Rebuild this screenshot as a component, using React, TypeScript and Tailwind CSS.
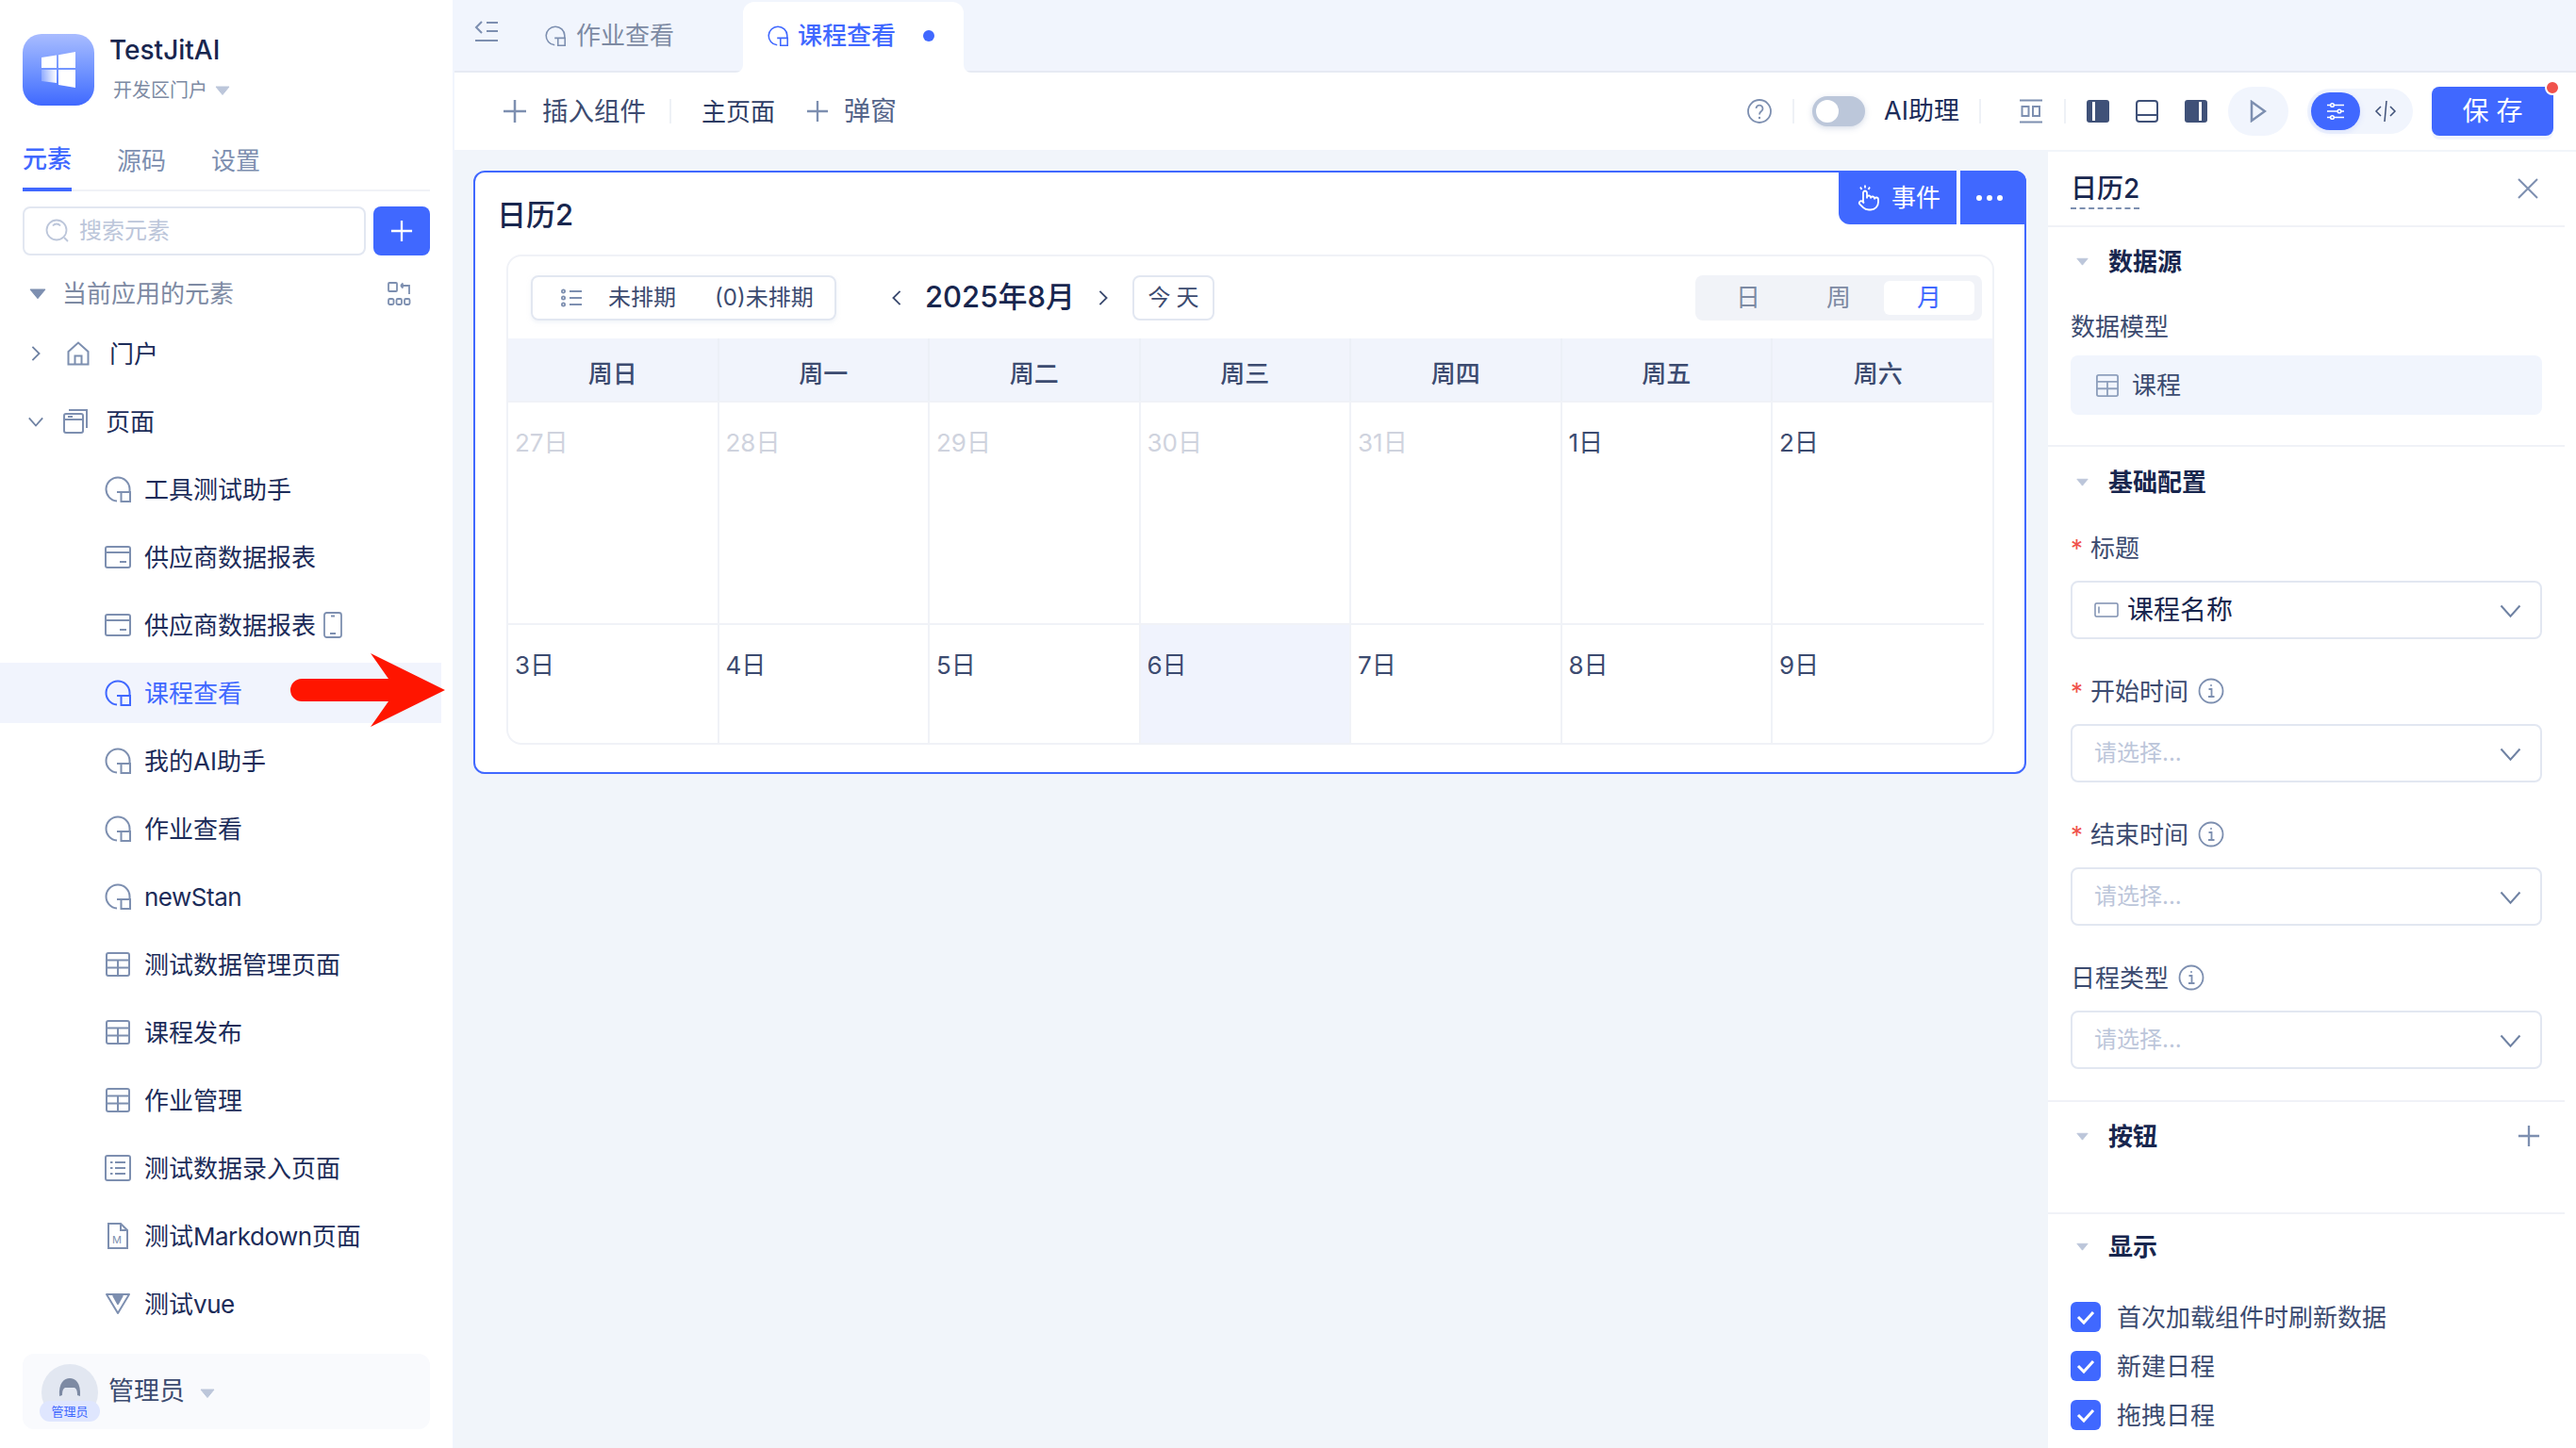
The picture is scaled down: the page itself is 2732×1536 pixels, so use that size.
import React from "react";

const S = "#7d8fb0";
const BLUE = "#4068ff";

function PageIcon({ c = S, s = 28 }: { c?: string; s?: number }) {
  return (
    <svg width={s} height={s} viewBox="0 0 28 28" fill="none" stroke={c} strokeWidth="2">
      <path d="M13 26.500A12.500 12.500 0 1 1 26.500 13.500V17" />
      <path d="M13 17h14v10H17.500V17" />
    </svg>
  );
}
function CardIcon() {
  return (
    <svg width="28" height="24" viewBox="0 0 28 24" fill="none" stroke={S} strokeWidth="2">
      <rect x="1" y="1" width="26" height="22" rx="2" />
      <path d="M1 7h26M16 17h7" />
    </svg>
  );
}
function TableIcon({ c = S, s = 26 }: { c?: string; s?: number }) {
  return (
    <svg width={s} height={s} viewBox="0 0 26 26" fill="none" stroke={c} strokeWidth="2">
      <rect x="1" y="1" width="24" height="24" rx="2" />
      <path d="M1 8.500h24M1 16.500h24M13 8.500V25" />
    </svg>
  );
}
function FormIcon() {
  return (
    <svg width="28" height="28" viewBox="0 0 28 28" fill="none" stroke={S} strokeWidth="2">
      <rect x="1" y="1" width="26" height="26" rx="2" />
      <path d="M6 8h2.500M11 8h11M6 14h2.500M11 14h11M6 20h2.500M11 20h11" />
    </svg>
  );
}
function MdIcon() {
  return (
    <svg width="22" height="28" viewBox="0 0 22 28" fill="none" stroke={S} strokeWidth="2">
      <path d="M1 1h13l7 7v19H1zM14 1v7h7" />
      <text x="5" y="22" fontSize="11" fill={S} stroke="none" fontFamily="Inter, sans-serif">M</text>
    </svg>
  );
}
function VueIcon() {
  return (
    <svg width="26" height="22" viewBox="0 0 26 22" fill="none" stroke={S} strokeWidth="2" strokeLinejoin="round">
      <path d="M1 1h24L13 21z" />
      <path d="M8 2l5 9 5-9" fill={S} />
    </svg>
  );
}
function Caret({ c = "#bcc6da", w = 16, h = 10 }: { c?: string; w?: number; h?: number }) {
  return (
    <svg width={w} height={h} viewBox="0 0 16 10">
      <path d="M1 1h14L8 9.500z" fill={c} stroke={c} strokeLinejoin="round" />
    </svg>
  );
}
function Chevron({ d = "down", s = 20, c = "#6f82a3", sw = 2 }: { d?: "down" | "right" | "left"; s?: number; c?: string; sw?: number }) {
  const p = d === "down" ? "M2 6l8 9 8-9" : d === "right" ? "M6 2l8 8-8 8" : "M14 2l-8 8 8 8";
  return (
    <svg width={s} height={s} viewBox="0 0 20 20" fill="none" stroke={c} strokeWidth={sw}>
      <path d={p} />
    </svg>
  );
}
function Plus({ s = 26, c = "#7d8fb0", sw = 2.500 }: { s?: number; c?: string; sw?: number }) {
  return (
    <svg width={s} height={s} viewBox="0 0 26 26" fill="none" stroke={c} strokeWidth={sw}>
      <path d="M13 1v24M1 13h24" />
    </svg>
  );
}
function Info() {
  return (
    <svg width="28" height="28" viewBox="0 0 28 28" fill="none" stroke={S} strokeWidth="1.800">
      <circle cx="14" cy="14" r="12.500" />
      <path d="M11.500 12h3v8M11 20h6.500" />
      <circle cx="14" cy="8" r="1" fill={S} stroke="none" />
    </svg>
  );
}
function Logo() {
  return (
    <div className="w-[76px] h-[76px] rounded-[20px] bg-gradient-to-b from-[#a9bcff] to-[#4068ff] flex items-center justify-center shrink-0">
      <svg width="36" height="38" viewBox="0 0 36 38">
        <defs>
          <linearGradient id="fade" x1="0" y1="0" x2="1" y2="0">
            <stop offset="0" stopColor="#fff" stopOpacity="0.25" />
            <stop offset="1" stopColor="#fff" />
          </linearGradient>
        </defs>
        <path d="M0 6l16-2.500V17H0z" fill="#fff" />
        <path d="M18 3.200L36 0v17H18z" fill="#fff" />
        <path d="M0 19h16v14L0 31z" fill="url(#fade)" />
        <path d="M18 19h18v19l-18-3z" fill="#fff" />
      </svg>
    </div>
  );
}

function Lat({ children }: { children: React.ReactNode }) {
  return <span className="tracking-[-0.5px]">{children}</span>;
}

const rows: { t: React.ReactNode; i: React.ReactNode; active?: boolean; extra?: React.ReactNode }[] = [
  { t: "工具测试助手", i: <PageIcon /> },
  { t: "供应商数据报表", i: <CardIcon /> },
  {
    t: "供应商数据报表",
    i: <CardIcon />,
    extra: (
      <svg className="ml-[8px]" width="20" height="28" viewBox="0 0 20 28" fill="none" stroke={S} strokeWidth="1.800">
        <rect x="1" y="1" width="18" height="26" rx="2.500" />
        <path d="M8 4.500h4M7 23h6" />
      </svg>
    ),
  },
  { t: "课程查看", i: <PageIcon c={BLUE} />, active: true },
  { t: "我的AI助手", i: <PageIcon /> },
  { t: "作业查看", i: <PageIcon /> },
  { t: <Lat>newStan</Lat>, i: <PageIcon /> },
  { t: "测试数据管理页面", i: <TableIcon /> },
  { t: "课程发布", i: <TableIcon /> },
  { t: "作业管理", i: <TableIcon /> },
  { t: "测试数据录入页面", i: <FormIcon /> },
  { t: <>测试<Lat>Markdown</Lat>页面</>, i: <MdIcon /> },
  { t: <>测试<Lat>vue</Lat></>, i: <VueIcon /> },
];

function Sidebar() {
  return (
    <aside className="w-[480px] shrink-0 h-full bg-white flex flex-col relative">
      <div className="flex gap-[16px] pt-[36px] pl-[24px]">
        <Logo />
        <div className="flex flex-col">
          <div className="text-[28px] leading-[32px] mt-[1px] font-medium text-[#18264e]">TestJitAI</div>
          <div className="flex items-center gap-[8px] pl-[4px] mt-[15px] text-[20px] leading-[24px] text-[#7d8aa3]">
            开发区门户 <Caret />
          </div>
        </div>
      </div>
      <div className="mx-[24px] mt-[28px] h-[63px] border-b-2 border-[#f0f2f7] flex gap-[48px] text-[26px] text-[#7d8fb0]">
        <div className="h-[63px] border-b-4 border-[#4068ff] text-[#4068ff] flex items-center pb-[2px] font-medium">元素</div>
        <div className="h-[61px] flex items-center">源码</div>
        <div className="h-[61px] flex items-center">设置</div>
      </div>
      <div className="mx-[24px] mt-[16px] flex gap-[8px] h-[52px]">
        <div className="w-[364px] border-2 border-[#e2e7f1] rounded-[8px] flex items-center pl-[22px] gap-[10px] text-[24px] text-[#bcc6da]">
          <svg width="26" height="26" viewBox="0 0 26 26" fill="none" stroke="#bcc6da" strokeWidth="1.800">
            <circle cx="12" cy="12" r="10.500" />
            <path d="M8 7.500a5 5 0 0 1 8 0M20 20l4 4" />
          </svg>
          搜索元素
        </div>
        <div className="w-[60px] bg-[#4068ff] rounded-[8px] flex items-center justify-center">
          <Plus s={24} c="#fff" />
        </div>
      </div>
      <div className="mt-[18px] h-[44px] flex items-center pl-[31px] text-[26px] text-[#7d8aa3]">
        <Caret c="#7d8fb0" w={18} h={11} />
        <span className="ml-[17px] flex-1">当前应用的元素</span>
        <svg className="mr-[44px]" width="25" height="25" viewBox="0 0 25 25" fill="none" stroke={S} strokeWidth="1.800">
          <rect x="1" y="1" width="9" height="9" rx="1" />
          <path d="M14 4l2.500-2.500M14 4l2.500 2.500M14 4h9v9" />
          <rect x="1" y="18" width="5.500" height="6" rx="1.500" />
          <rect x="9.500" y="18" width="5.500" height="6" rx="1.500" />
          <rect x="18" y="18" width="5.500" height="6" rx="1.500" />
        </svg>
      </div>
      <div className="mt-[10px] w-[468px] flex flex-col gap-[8px] text-[26px] text-[#1c2c59]">
        <div className="h-[64px] flex items-center pl-[29px]">
          <Chevron d="right" s={18} />
          <span className="ml-[24px] w-[24px] flex justify-center">
            <svg width="24" height="26" viewBox="0 0 24 26" fill="none" stroke={S} strokeWidth="2">
              <path d="M1.500 11L12 1.500 22.500 11v13.500h-21zM8.500 24.500v-9h7v9" />
            </svg>
          </span>
          <span className="ml-[21px]">门户</span>
        </div>
        <div className="h-[64px] flex items-center pl-[29px]">
          <Chevron d="down" s={18} />
          <span className="ml-[19px] w-[28px] flex justify-center">
            <svg width="26" height="26" viewBox="0 0 26 26" fill="none" stroke={S} strokeWidth="2">
              <path d="M6 1h19v19" />
              <rect x="1" y="5" width="20" height="20" rx="2" />
              <path d="M1 11h20M5 8h5" />
            </svg>
          </span>
          <span className="ml-[18px]">页面</span>
        </div>
        {rows.map((r, i) => (
          <div key={i} className={"h-[64px] flex items-center pl-[111px] " + (r.active ? "bg-[#f1f4fd] text-[#4068ff]" : "")}>
            <span className="w-[28px] flex justify-center shrink-0">{r.i}</span>
            <span className="ml-[14px]">{r.t}</span>
            {r.extra}
          </div>
        ))}
      </div>
      <div className="mt-auto mb-[20px] mx-[24px] h-[80px] rounded-[12px] bg-[#f9fafd] flex items-center pl-[20px] text-[27px] text-[#3c4b70]">
        <div className="relative w-[60px] h-[60px] mt-[2px] rounded-full bg-[#e2e7f1] shrink-0 flex justify-center overflow-visible">
          <svg className="mt-[14px]" width="24" height="22" viewBox="0 0 24 22">
            <path d="M1 20C0 6 6 1 12 1s12 5 11 19l-3-1c0-5-1-7-3-8H7c-2 1-3 3-3 8z" fill="#7d8aa3" />
          </svg>
          <div className="absolute left-[-2px] bottom-[-1px] w-[64px] h-[22px] rounded-full bg-[#dfe6fe] text-[13px] leading-[22px] text-center text-[#4068ff]">管理员</div>
        </div>
        <span className="ml-[11px]">管理员</span>
        <span className="ml-[16px] mt-[3px]"><Caret /></span>
      </div>
      <svg className="absolute left-[308px] top-[693px]" width="166" height="78" viewBox="0 0 166 78">
        <path d="M12 27H104L85 0l79 39-79 39 19-27H12a12 12 0 0 1 0-24z" fill="#ff1500" />
      </svg>
    </aside>
  );
}

function TopTabs() {
  return (
    <div className="h-[77px] shrink-0 flex border-b-2 border-[#e6eaf3] relative">
      <div className="w-[96px] pl-[21px] pt-[22px]">
        <svg width="26" height="22" viewBox="0 0 26 22" fill="none" stroke={S} strokeWidth="2">
          <path d="M8 1l-6 6 6 6M13 2h12M13 11h12M1 21h24" />
        </svg>
      </div>
      <div className="w-[210px] flex items-center h-[75px] gap-[11px] text-[26px] text-[#7d8aa3]">
        <PageIcon s={22} />
        <span>作业查看</span>
      </div>
      <div className="relative w-[234px] mt-[2px] h-[75px] bg-white rounded-t-[12px] flex items-center pl-[26px] mb-[-2px] pb-[4px] text-[26px] font-medium text-[#4068ff]">
        <svg className="absolute left-[-8px] bottom-0" width="8" height="8" viewBox="0 0 8 8">
          <path d="M8 0v8H0a8 8 0 0 0 8-8z" fill="#fff" />
        </svg>
        <svg className="absolute right-[-8px] bottom-0" width="8" height="8" viewBox="0 0 8 8">
          <path d="M0 0v8h8a8 8 0 0 1-8-8z" fill="#fff" />
        </svg>
        <PageIcon c={BLUE} s={22} />
        <span className="ml-[10px]">课程查看</span>
        <span className="ml-[29px] w-[12px] h-[12px] rounded-full bg-[#4068ff]" />
      </div>
    </div>
  );
}

function VDiv() {
  return <span className="block w-[2px] h-[26px] bg-[#eef1f6] shrink-0" />;
}

function Toolbar() {
  return (
    <div className="h-[82px] shrink-0 bg-white flex items-center pl-[51px] text-[#1c2c59]">
      <Plus s={26} />
      <span className="ml-[16px] pt-[2px] text-[27.500px] text-[#3c4b70]">插入组件</span>
      <span className="ml-[25px]"><VDiv /></span>
      <span className="ml-[32px] text-[26px] text-[#2c3b63]">主页面</span>
      <span className="ml-[33px]"><Plus s={24} /></span>
      <span className="ml-[16px] text-[28px] text-[#55658a]">弹窗</span>
      <span className="flex-1" />
      <svg width="26" height="26" viewBox="0 0 26 26" fill="none" stroke={S} strokeWidth="1.800">
        <circle cx="13" cy="13" r="12" />
        <path d="M9.500 10a3.500 3.500 0 1 1 5.500 3c-1.500 1-2 1.500-2 3.500" />
        <circle cx="13" cy="20" r="1.200" fill={S} stroke="none" />
      </svg>
      <span className="ml-[22px]"><VDiv /></span>
      <div className="ml-[19px] w-[56px] h-[32px] rounded-full bg-[#bcc7da] flex items-center pl-[4px] shadow-[0_2px_6px_rgba(120,140,180,0.3)]">
        <span className="w-[24px] h-[24px] rounded-full bg-white" />
      </div>
      <span className="ml-[20px] text-[27px]">AI助理</span>
      <span className="ml-[21px]"><VDiv /></span>
      <span className="ml-[41px]">
        <svg width="24" height="26" viewBox="0 0 24 26" fill="none" stroke={S} strokeWidth="2">
          <path d="M0 1.500h24M0 24.500h24" />
          <rect x="2.500" y="8" width="7" height="10" />
          <rect x="14" y="8" width="7" height="10" />
        </svg>
      </span>
      <span className="ml-[23px]"><VDiv /></span>
      <span className="ml-[22px]">
        <svg width="24" height="24" viewBox="0 0 24 24">
          <rect width="24" height="24" rx="3" fill="#3f5178" />
          <rect x="6" y="2" width="3" height="20" fill="#fff" />
        </svg>
      </span>
      <span className="ml-[28px]">
        <svg width="24" height="24" viewBox="0 0 24 24" fill="none" stroke="#3f5178" strokeWidth="2">
          <rect x="1" y="1" width="22" height="22" rx="3" />
          <path d="M1 16h22" />
        </svg>
      </span>
      <span className="ml-[28px]">
        <svg width="24" height="24" viewBox="0 0 24 24">
          <rect width="24" height="24" rx="3" fill="#3f5178" />
          <rect x="15" y="2" width="3" height="20" fill="#fff" />
        </svg>
      </span>
      <div className="ml-[22px] w-[64px] h-[52px] rounded-full bg-[#f1f5fd] flex items-center justify-center">
        <svg width="18" height="24" viewBox="0 0 18 24" fill="none" stroke={S} strokeWidth="2.500">
          <path d="M2 2v20l14-10z" />
        </svg>
      </div>
      <div className="ml-[20px] w-[112px] h-[48px] rounded-full bg-[#f1f5fd] flex items-center pl-[4px]">
        <span className="w-[52px] h-[40px] rounded-full bg-[#4068ff] flex items-center justify-center shadow-[0_2px_6px_rgba(64,104,255,0.15)]">
          <svg width="20" height="20" viewBox="0 0 20 20" fill="none" stroke="#fff" strokeWidth="1.600">
            <path d="M1 3.500h4M8.500 3.500h10.500M1 10h11M16 10h3M1 16.500h4M8.500 16.500h10.500" />
            <circle cx="6.500" cy="3.500" r="1.800" />
            <circle cx="14" cy="10" r="1.800" />
            <circle cx="6.500" cy="16.500" r="1.800" />
          </svg>
        </span>
        <span className="ml-[15px]">
          <svg width="24" height="24" viewBox="0 0 24 24" fill="none" stroke="#3f5178" strokeWidth="1.500">
            <path d="M7 7l-5 5 5 5M17 7l5 5-5 5M13 1l-2 22" />
          </svg>
        </span>
      </div>
      <div className="ml-[20px] mr-[24px] relative w-[129px] h-[52px] rounded-[8px] bg-[#4068ff] text-white text-[28px] tracking-[8px] pl-[8px] flex items-center justify-center shadow-[0_4px_0_#f1f4fd]">
        保存
        <span className="absolute right-[-7px] top-[-7px] w-[16px] h-[16px] rounded-full bg-[#f0524c] border-2 border-white" />
      </div>
    </div>
  );
}

const weekdays = ["周日", "周一", "周二", "周三", "周四", "周五", "周六"];
const r1 = ["27日", "28日", "29日", "30日", "31日", "1日", "2日"];
const r2 = ["3日", "4日", "5日", "6日", "7日", "8日", "9日"];

function Calendar() {
  return (
    <div className="relative w-[1647px] h-[640px] border-2 border-[#4068ff] rounded-[12px] bg-white flex flex-col pl-[33px] pr-[32px]">
      <div className="absolute right-[-2px] top-[-2px] h-[57px] w-[199px] bg-[#4068ff] rounded-tr-[12px] rounded-bl-[12px] flex items-center text-white text-[26px]">
        <span className="ml-[20px]">
          <svg width="24" height="32" viewBox="0 -5 24 29" fill="none" stroke="#fff" strokeWidth="1.800">
            <path d="M18 11v-1a2 2 0 0 0-2-2a2 2 0 0 0-2 2M14 10V9a2 2 0 0 0-2-2a2 2 0 0 0-2 2v1M10 9.500V4a2 2 0 0 0-2-2a2 2 0 0 0-2 2v10M18 11a2 2 0 1 1 4 0v3a8 8 0 0 1-8 8h-2c-2.800 0-4.500-.860-5.990-2.340l-3.600-3.600a2 2 0 0 1 2.830-2.820L7 15" />
            <path d="M8 -4v3M3 -2l1.500 2.500M13 -2l-1.500 2.500" />
          </svg>
        </span>
        <span className="ml-[12px] w-[52px]">事件</span>
        <span className="ml-[17px] w-[4px] h-[57px] bg-white" />
        <span className="ml-[17px] flex gap-[5px]">
          <span className="w-[6px] h-[6px] rounded-full bg-white" />
          <span className="w-[6px] h-[6px] rounded-full bg-white" />
          <span className="w-[6px] h-[6px] rounded-full bg-white" />
        </span>
      </div>
      <div className="ml-[-10px] h-[87px] pt-[4px] flex items-center text-[31px] font-medium text-[#18264e] shrink-0">
        <span>日历2</span>
      </div>
      <div className="w-[1578px] h-[520px] border-2 border-[#f0f2f7] rounded-[16px] overflow-hidden flex flex-col">
        <div className="h-[87px] shrink-0 flex items-center pl-[24px] pr-[11px]">
          <div className="w-[324px] h-[48px] border-2 border-[#e2e7f1] rounded-[8px] flex items-center pl-[30px] text-[24px] text-[#3c4b70] shadow-[0_2px_4px_rgba(226,231,241,0.5)]">
            <svg width="22" height="22" viewBox="0 0 22 22" fill="none" stroke={S} strokeWidth="1.800">
              <path d="M9 4h13M9 11h13M9 18h13" />
              <circle cx="2.500" cy="4" r="1.600" />
              <circle cx="2.500" cy="11" r="1.600" />
              <circle cx="2.500" cy="18" r="1.600" />
            </svg>
            <span className="ml-[28px]">未排期</span>
            <span className="ml-[41px]">(0)未排期</span>
          </div>
          <span className="ml-[55px]"><Chevron d="left" s={18} c="#3c4b70" /></span>
          <span className="ml-[21px] text-[31px] font-medium text-[#18264e]">2025年8月</span>
          <span className="ml-[21px]"><Chevron d="right" s={18} c="#3c4b70" /></span>
          <div className="ml-[22px] w-[87px] h-[48px] border-2 border-[#e2e7f1] rounded-[8px] flex items-center justify-center text-[24px] tracking-[6px] pl-[6px] text-[#3c4b70]">今天</div>
          <span className="flex-1" />
          <div className="w-[304px] h-[48px] rounded-[8px] bg-[#f1f3f8] flex items-center pl-[8px] text-[26px] text-[#7d8aa3]">
            <span className="w-[96px] text-center">日</span>
            <span className="w-[96px] text-center">周</span>
            <span className="w-[96px] h-[36px] leading-[36px] rounded-[6px] bg-white text-center text-[#4068ff]">月</span>
          </div>
        </div>
        <div className="h-[68px] shrink-0 bg-[#f1f4fc] grid grid-cols-[repeat(7,223.500px)] border-b-2 border-[#f0f2f7]">
          {weekdays.map((d, i) => (
            <div key={d} className={"flex items-center justify-center pt-[8px] text-[26px] font-medium text-[#3c4b70] " + (i < 6 ? "border-r-2 border-[#ecf0f7]" : "")}>{d}</div>
          ))}
        </div>
        <div className="h-[236px] shrink-0 grid grid-cols-[repeat(7,223.500px)] w-[1564.500px] border-b-2 border-[#f0f2f7]">
          {r1.map((d, i) => (
            <div key={d} className={"pl-[7px] pt-[24px] text-[26px] leading-[38px] " + (i < 5 ? "text-[#cfd3de] " : "text-[#3c4b70] ") + (i < 6 ? "border-r-2 border-[#f0f2f7]" : "")}>{d}</div>
          ))}
        </div>
        <div className="flex-1 grid grid-cols-[repeat(7,223.500px)] w-[1564.500px]">
          {r2.map((d, i) => (
            <div key={d} className={"pl-[7px] pt-[24px] text-[26px] leading-[38px] text-[#3c4b70] " + (i === 3 ? "bg-[#f0f3fd] " : "") + (i < 6 ? "border-r-2 border-[#f0f2f7]" : "")}>{d}</div>
          ))}
        </div>
      </div>
    </div>
  );
}

function SectionHead({ t, right }: { t: string; right?: React.ReactNode }) {
  return (
    <div className="h-[44px] flex items-center pl-[30px] pr-[26px]">
      <Caret w={13} h={9} />
      <span className="ml-[21px] flex-1 text-[26px] font-bold text-[#18264e]">{t}</span>
      {right}
    </div>
  );
}

function Field({ label, req, info, value }: { label: string; req?: boolean; info?: boolean; value?: string }) {
  return (
    <div className="mx-[24px]">
      <div className="h-[36px] flex items-center text-[26px] text-[#3c4b70]">
        {req && <span className="text-[#f0524c] w-[21px] text-[26px] leading-[36px] mt-[2px]">*</span>}
        <span>{label}</span>
        {info && <span className="ml-[10px] flex"><Info /></span>}
      </div>
      <div className="mt-[17px] h-[62px] border-2 border-[#e2e7f1] rounded-[8px] flex items-center pl-[23px] pr-[19px]">
        {value ? (
          <>
            <svg width="26" height="16" viewBox="0 0 26 16" fill="none" stroke={S} strokeWidth="1.500">
              <rect x="1" y="1" width="24" height="14" rx="1.500" />
              <path d="M5 4.500v7" />
            </svg>
            <span className="ml-[9px] text-[28px] text-[#18264e]">{value}</span>
          </>
        ) : (
          <span className="text-[24px] text-[#bcc6da]">请选择...</span>
        )}
        <span className="flex-1" />
        <Chevron s={25} sw={1.600} />
      </div>
    </div>
  );
}

function Check({ t }: { t: string }) {
  return (
    <div className="h-[32px] flex items-center">
      <span className="w-[32px] h-[32px] rounded-[6px] bg-[#4068ff] flex items-center justify-center">
        <svg width="20" height="20" viewBox="0 0 20 20" fill="none" stroke="#fff" strokeWidth="3">
          <path d="M2 10l6 6 10-11" />
        </svg>
      </span>
      <span className="ml-[17px] text-[26px] text-[#3c4b70]">{t}</span>
    </div>
  );
}

function RightPanel() {
  return (
    <div className="w-[560px] shrink-0 h-[1375px] mt-[2px] bg-white overflow-hidden pr-[12px]">
      <div className="h-[80px] border-b-2 border-[#f0f2f7] flex items-center pl-[24px] pr-[27px]">
        <span className="text-[28px] leading-[40px] font-medium text-[#18264e] border-b-2 border-dashed border-[#7d8fb0] mt-[2px]">日历2</span>
        <span className="flex-1" />
        <svg width="24" height="24" viewBox="0 0 24 24" fill="none" stroke={S} strokeWidth="2">
          <path d="M2 2l20 20M22 2L2 22" />
        </svg>
      </div>
      <div className="h-[233px] border-b-2 border-[#f0f2f7] pt-[14px]">
        <SectionHead t="数据源" />
        <div className="ml-[24px] mt-[29px] h-[36px] flex items-center text-[26px] text-[#3c4b70]">数据模型</div>
        <div className="mx-[24px] mt-[13px] h-[63px] bg-[#f1f5fd] rounded-[8px] flex items-center pl-[27px] text-[26px] text-[#3c4b70]">
          <TableIcon s={24} c="#8fa0bd" />
          <span className="ml-[14px]">课程</span>
        </div>
      </div>
      <div className="h-[695px] border-b-2 border-[#f0f2f7] pt-[15px]">
        <SectionHead t="基础配置" />
        <div className="mt-[30px] flex flex-col gap-[37px]">
          <Field label="标题" req value="课程名称" />
          <Field label="开始时间" req info />
          <Field label="结束时间" req info />
          <Field label="日程类型" info />
        </div>
      </div>
      <div className="h-[119px] border-b-2 border-[#f0f2f7] pt-[14px]">
        <SectionHead t="按钮" right={<Plus s={24} />} />
      </div>
      <div className="pt-[12px]">
        <SectionHead t="显示" />
        <div className="mx-[24px] mt-[37px] flex flex-col gap-[20px]">
          <Check t="首次加载组件时刷新数据" />
          <Check t="新建日程" />
          <Check t="拖拽日程" />
        </div>
      </div>
    </div>
  );
}

export default function App() {
  return (
    <div className="w-[2732px] h-[1536px] flex overflow-hidden bg-[#f1f5fd] font-['Inter','Noto_Sans_CJK_SC',sans-serif]">
      <Sidebar />
      <main className="w-[2250px] ml-[2px] flex flex-col h-full">
        <TopTabs />
        <Toolbar />
        <div className="flex-1 flex bg-[#f1f5fa]">
          <div className="w-[1690px] shrink-0 pl-[20px] pt-[22px]">
            <Calendar />
          </div>
          <RightPanel />
        </div>
      </main>
    </div>
  );
}
